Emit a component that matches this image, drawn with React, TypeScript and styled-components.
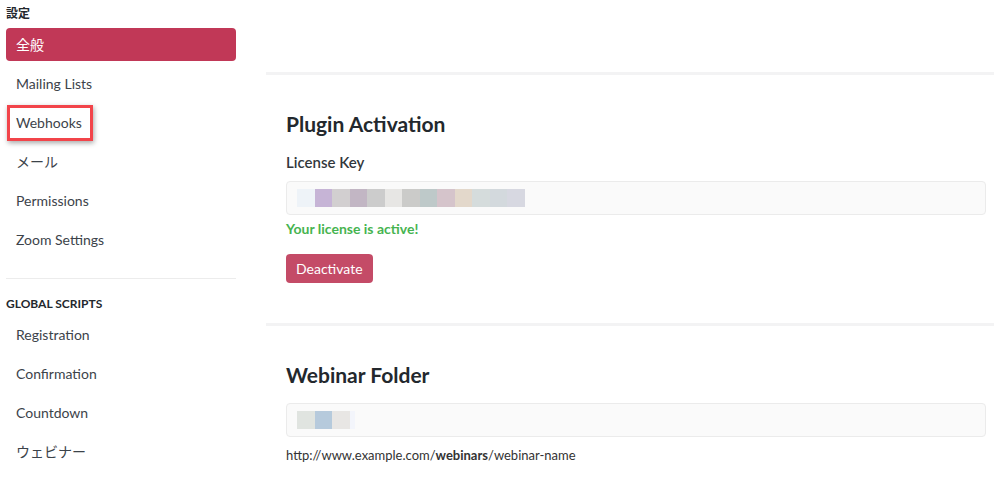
import React from "react";
import styled, { createGlobalStyle } from "styled-components";

const GlobalStyle = createGlobalStyle`
  html, body {
    margin: 0;
    padding: 0;
    background: #fff;
  }
  body {
    font-family: Lato, "Noto Sans CJK JP", sans-serif;
    color: #32373c;
  }
`;

const Page = styled.div`
  display: flex;
  width: 994px;
  height: 482px;
  overflow: hidden;
`;

const Sidebar = styled.nav`
  width: 230px;
  padding: 6px 0 0 6px;
  flex-shrink: 0;
`;

const GroupTitle = styled.div`
  font-size: 12px;
  font-weight: 700;
  color: #23282d;
  height: 16px;
  line-height: 16px;
  margin-bottom: 6px;
  text-transform: uppercase;
`;

const MenuList = styled.ul`
  list-style: none;
  margin: 0;
  padding: 0;
`;

const MenuItem = styled.li<{ $active?: boolean; $marked?: boolean }>`
  position: relative;
  height: 33px;
  line-height: 33px;
  margin-bottom: 6px;
  padding-left: 10px;
  border-radius: 4px;
  font-size: 14px;
  background: ${(p) => (p.$active ? "#c13857" : "transparent")};
  color: ${(p) => (p.$active ? "#fff" : "#3c434a")};

  ${(p) =>
    p.$marked &&
    `
    &::after {
      content: "";
      position: absolute;
      left: 1px;
      top: -1px;
      width: 80px;
      height: 30px;
      border: 3px solid #f2444a;
      box-shadow: 1px 2px 5px rgba(0, 0, 0, 0.35);
    }
  `}
`;

const Divider = styled.hr`
  border: none;
  border-top: 1px solid #ececec;
  margin: 22px 0 17px;
`;

const Main = styled.main`
  flex: 1;
  margin-left: 30px;
  padding-top: 72px;
`;

const Section = styled.section`
  border-top: 3px solid #f3f3f4;
  padding: 35px 8px 40px 20px;
`;

const Heading = styled.h2`
  margin: 0 0 14px;
  font-size: 21px;
  font-weight: 700;
  line-height: 28px;
  color: #23282d;
`;

const Label = styled.div`
  font-size: 15px;
  font-weight: 600;
  color: #32373c;
  line-height: 20px;
  margin-bottom: 9px;
`;

const Field = styled.div`
  height: 32px;
  display: flex;
  align-items: center;
  padding-left: 10px;
  border: 1px solid #ebebeb;
  border-radius: 4px;
  background: #fafafa;
`;

const Swatch = styled.span<{ $c: string; $w?: number }>`
  display: inline-block;
  width: ${(p) => p.$w ?? 17.5}px;
  height: 18px;
  background: ${(p) => p.$c};
`;

const Success = styled.div`
  margin-top: 4px;
  font-size: 14px;
  font-weight: 700;
  color: #46b450;
  line-height: 20px;
`;

const Button = styled.button`
  margin-top: 15px;
  height: 29px;
  padding: 0 10px;
  border: none;
  border-radius: 4px;
  background: #c44b67;
  color: #fff;
  font-family: inherit;
  font-size: 14px;
  cursor: pointer;
`;

const Hint = styled.div`
  margin-top: 9px;
  font-size: 13px;
  color: #333;
  line-height: 18px;
  b {
    font-weight: 700;
  }
`;

const keySwatches = [
  "#eef3f8",
  "#c6b4d6",
  "#d2cfd0",
  "#c2b6c4",
  "#cccccc",
  "#e7e6e4",
  "#cbcbc9",
  "#bec9c9",
  "#d5c4cb",
  "#e3d8cb",
  "#d5dcdc",
  "#d3d9dd",
  "#d7d8e1",
];

const folderSwatches: [string, number][] = [
  ["#e0e4e0", 18],
  ["#b6cadc", 17],
  ["#e8e6e4", 18],
  ["#f3f5fb", 5],
];

const settings = ["Mailing Lists", "Webhooks", "メール", "Permissions", "Zoom Settings"];
const scripts = ["Registration", "Confirmation", "Countdown", "ウェビナー"];

export default function App() {
  return (
    <Page>
      <GlobalStyle />
      <Sidebar>
        <GroupTitle>設定</GroupTitle>
        <MenuList>
          <MenuItem $active>全般</MenuItem>
          {settings.map((s) => (
            <MenuItem key={s} $marked={s === "Webhooks"}>
              {s}
            </MenuItem>
          ))}
        </MenuList>
        <Divider />
        <GroupTitle>Global Scripts</GroupTitle>
        <MenuList>
          {scripts.map((s) => (
            <MenuItem key={s}>{s}</MenuItem>
          ))}
        </MenuList>
      </Sidebar>
      <Main>
        <Section>
          <Heading>Plugin Activation</Heading>
          <Label>License Key</Label>
          <Field>
            {keySwatches.map((c, i) => (
              <Swatch key={i} $c={c} />
            ))}
          </Field>
          <Success>Your license is active!</Success>
          <Button>Deactivate</Button>
        </Section>
        <Section>
          <Heading>Webinar Folder</Heading>
          <Field>
            {folderSwatches.map(([c, w], i) => (
              <Swatch key={i} $c={c} $w={w} />
            ))}
          </Field>
          <Hint>
            http://www.example.com/<b>webinars</b>/webinar-name
          </Hint>
        </Section>
      </Main>
    </Page>
  );
}
